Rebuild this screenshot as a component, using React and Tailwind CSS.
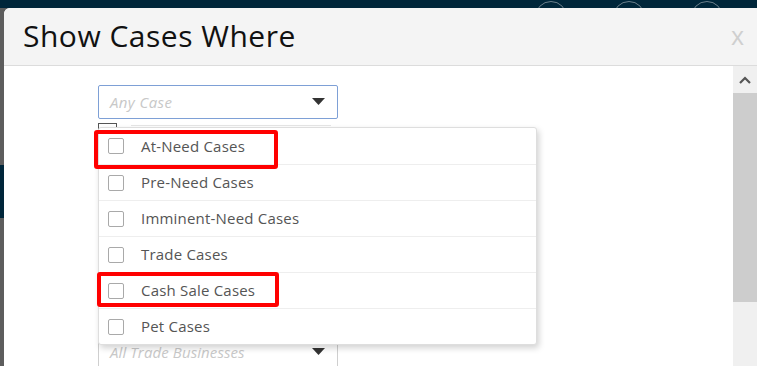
import React from 'react';

const OPTIONS = [
  'At-Need Cases',
  'Pre-Need Cases',
  'Imminent-Need Cases',
  'Trade Cases',
  'Cash Sale Cases',
  'Pet Cases',
];

const Caret = () => (
  <svg width="13" height="8" viewBox="0 0 13 8" className="shrink-0">
    <path d="M0 0 L13 0 L6.5 7 Z" fill="#333" />
  </svg>
);

const App = () => {
  return (
    <div className="relative w-[757px] h-[366px] overflow-hidden bg-[#5d5d5d] font-['Open_Sans',sans-serif]">
      {/* page behind the overlay */}
      <div className="absolute left-0 top-0 w-full h-[8px] bg-[#00263a]" />
      <div className="absolute left-0 top-[165px] w-[4px] h-[53px] bg-[#00263a]" />
      {[535, 613, 691].map((x) => (
        <div
          key={x}
          className="absolute top-[1px] w-[32px] h-[32px] rounded-full border border-[#6b7f8b]"
          style={{ left: x }}
        />
      ))}

      {/* modal */}
      <div className="absolute left-[4px] top-[8px] w-[760px] h-[400px] bg-white rounded-t-[6px] flex flex-col overflow-hidden">
        <div className="h-[58px] shrink-0 bg-[#f4f4f4] border-b border-[#dcdcdc] flex items-center justify-between pl-[19px] pr-[20px]">
          <h1 className="text-[30px] leading-none text-[#111] tracking-[0.5px] pb-[2px]">Show Cases Where</h1>
          <span className="text-[25px] leading-none text-[#cfcfcf] pb-[2px]">x</span>
        </div>

        <div className="flex flex-1 min-h-0">
          <div className="relative w-[729px] flex flex-col pl-[94px] pt-[19px]">
            {/* main select */}
            <div className="w-[240px] h-[34px] shrink-0 border border-[#7ea0d6] rounded-[2px] flex items-center justify-between pl-[11px] pr-[12px]">
              <span className="italic text-[15px] text-[#c8c8c8] tracking-[0.4px]">Any Case</span>
              <Caret />
            </div>

            {/* partially hidden row under the dropdown */}
            <div className="h-[10px] mt-[4px] shrink-0 flex items-start">
              <div className="w-[19px] h-[10px] border-t border-x border-[#555]" />
              <div className="ml-[14px] mt-[2px] w-[200px] h-px bg-[#e6e6e6]" />
            </div>

            {/* dropdown list */}
            <div className="absolute left-[94px] top-[61px] w-[439px] bg-white border border-[#dedede] rounded-[3px] shadow-[2px_3px_6px_rgba(0,0,0,0.18)] z-10">
              {OPTIONS.map((label, i) => (
                <div
                  key={label}
                  className={`h-[36px] flex items-center pl-[9px] ${i > 0 ? 'border-t border-[#eeeeee]' : ''}`}
                >
                  <div className="w-[16px] h-[16px] border border-[#a9a9a9] rounded-[2px] bg-white" />
                  <span className="ml-[17px] text-[15px] text-[#555] tracking-[0.2px]">{label}</span>
                </div>
              ))}
            </div>

            {/* annotation boxes */}
            <div className="absolute left-[90px] top-[64px] w-[184px] h-[39px] border-[4px] border-[#ff0000] rounded-[3px] z-20" />
            <div className="absolute left-[93px] top-[206px] w-[182px] h-[35px] border-[4px] border-[#ff0000] rounded-[3px] z-20" />

            {/* second select */}
            <div className="mt-[202px] w-[240px] h-[34px] shrink-0 border border-[#cfcfcf] rounded-[2px] flex items-center justify-between pl-[11px] pr-[12px]">
              <span className="italic text-[15px] text-[#c8c8c8] tracking-[0.1px]">All Trade Businesses</span>
              <Caret />
            </div>
          </div>

          {/* scrollbar */}
          <div className="w-[24px] flex flex-col bg-[#f0f0f0]">
            <div className="h-[27px] flex items-center justify-center">
              <svg width="12" height="8" viewBox="0 0 12 8">
                <path d="M1 7 L6 2 L11 7" stroke="#555" strokeWidth="2.2" fill="none" />
              </svg>
            </div>
            <div className="h-[209px] bg-[#cdcdcd]" />
          </div>
        </div>
      </div>
    </div>
  );
};

export default App;
